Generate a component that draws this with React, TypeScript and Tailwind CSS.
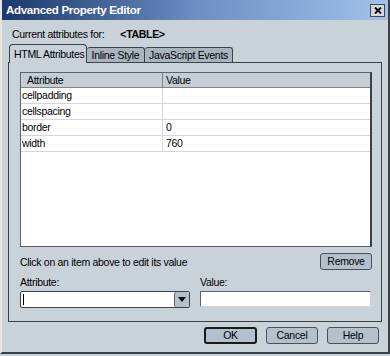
const font = { fontFamily: '"Liberation Sans", Arial, sans-serif' }

function Btn({ label, def, className }: { label: string; def?: boolean; className?: string }) {
  return (
    <button
      type="button"
      className={`flex h-[17px] items-center justify-center rounded-[3px] bg-[#b4c0cc] text-[10.5px] leading-none text-black ${
        def ? 'border-2 border-[#1a1a1a]' : 'border border-[#4a5058]'
      } ${className ?? ''}`}
    >
      {label}
    </button>
  )
}

const rows = [
  { name: 'cellpadding', value: '' },
  { name: 'cellspacing', value: '' },
  { name: 'border', value: '0' },
  { name: 'width', value: '760' },
]

export default function App() {
  return (
    <div
      className="h-[356px] w-[390px] overflow-hidden bg-[#c9d1d9] text-[10.5px] leading-[13px] tracking-[-0.3px] text-black"
      style={font}
    >
      <div className="flex h-[354px] flex-col border-b-2 border-l-2 border-r-2 border-b-[#3c4148] border-l-[#e6e6dc] border-r-[#3c4148]">
        {/* title bar */}
        <div className="flex h-[20px] shrink-0 items-center justify-between bg-gradient-to-r from-[#1c386c] via-[#6c8ec2] to-[#a2c2ea] pl-[4px] pr-[3px]">
          <span className="text-[11.5px] font-bold tracking-[-0.3px] text-white">Advanced Property Editor</span>
          <div className="flex h-[13px] w-[15px] items-center justify-center border border-[#40464e] bg-[#d4d8dc]">
            <svg width="8" height="7" viewBox="0 0 8 7">
              <path d="M1 0.5 7 6.5M7 0.5 1 6.5" stroke="#000" strokeWidth="1.8" />
            </svg>
          </div>
        </div>

        <div className="mt-[8px] flex h-[13px] items-center pl-[10px]">
          <span>Current attributes for:</span>
          <span className="ml-[16px] font-bold">&lt;TABLE&gt;</span>
        </div>

        {/* tabs */}
        <div className="ml-[7px] mt-[4px] flex h-[18px] items-end">
          <div className="relative z-10 flex h-[19px] w-[78px] items-center whitespace-nowrap rounded-t-[4px] border border-b-0 border-[#3c4148] bg-[#c9d1d9] pl-[4px]">
            HTML Attributes
          </div>
          <div className="flex h-[16px] w-[58px] items-center justify-center whitespace-nowrap rounded-t-[3px] border border-b-0 border-l-0 border-[#3c4148] bg-[#a9b4bf]">
            Inline Style
          </div>
          <div className="flex h-[16px] w-[88px] items-center justify-center whitespace-nowrap rounded-t-[3px] border border-b-0 border-l-0 border-[#3c4148] bg-[#a9b4bf]">
            JavaScript Events
          </div>
        </div>

        {/* tab panel */}
        <div className="-mt-px ml-[6px] mr-[6px] flex h-[260px] flex-col border border-[#3c4148] pl-[11px] pr-[9px] pt-[9px]">
          <div className="flex h-[175px] flex-col border border-[#5c636c] border-r-2 border-r-[#3c4148] bg-white">
            <div className="flex h-[15px] border-b border-[#7c848c] bg-[#c5cdd5]">
              <div className="flex w-[142px] items-center border-r border-[#7c848c] pl-[6px]">Attribute</div>
              <div className="flex flex-1 items-center pl-[3px]">Value</div>
            </div>
            {rows.map((r) => (
              <div key={r.name} className="flex h-[16px] border-b border-[#d6d6d6]">
                <div className="flex w-[142px] items-center border-r border-[#d6d6d6] pl-[1px]">{r.name}</div>
                <div className="flex flex-1 items-center pl-[3px]">{r.value}</div>
              </div>
            ))}
          </div>

          <div className="mt-[6px] flex items-start justify-between">
            <span className="mt-[3px]">Click on an item above to edit its value</span>
            <Btn label="Remove" className="w-[52px]" />
          </div>

          <div className="mt-[6px] flex gap-[10px]">
            <div className="flex w-[170px] flex-col">
              <span>Attribute:</span>
              <div className="mt-[2px] flex h-[17px] items-stretch rounded-[2px] border border-[#3c4148] bg-white">
                <div className="flex flex-1 items-center pl-[2px]">
                  <span className="h-[11px] w-px bg-black" />
                </div>
                <div className="flex w-[15px] items-center justify-center rounded-[2px] border-l border-[#5c636c] bg-[#b4c0cc]">
                  <svg width="8" height="5" viewBox="0 0 8 5">
                    <path d="M0 0h8L4 5z" fill="#000" />
                  </svg>
                </div>
              </div>
            </div>
            <div className="flex w-[171px] flex-col">
              <span>Value:</span>
              <div className="mt-[2px] h-[16px] border border-[#5c636c] border-b-[#d0d4d8] border-r-[#d0d4d8] bg-white" />
            </div>
          </div>
        </div>

        {/* footer buttons */}
        <div className="mt-[5px] flex justify-end gap-[9px] pr-[9px]">
          <Btn label="OK" def className="w-[53px]" />
          <Btn label="Cancel" className="w-[52px]" />
          <Btn label="Help" className="w-[52px]" />
        </div>
      </div>
    </div>
  )
}
